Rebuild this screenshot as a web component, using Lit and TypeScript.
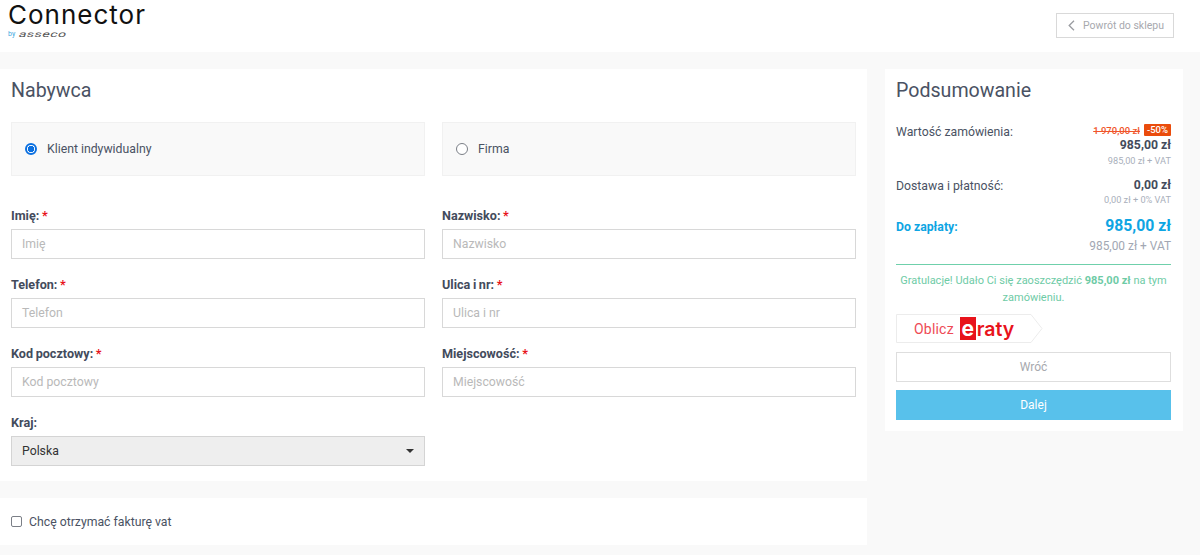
import { LitElement, html, css } from "lit";
import { customElement } from "lit/decorators.js";

@customElement("app-root")
export class AppRoot extends LitElement {
  static styles = css`
    :host { display: block; width: 1200px; height: 555px; overflow: hidden; background: #f9f9f9; font-family: Roboto, "Liberation Sans", sans-serif; font-size: 12.25px; color: #4a5263; }
    * { box-sizing: border-box; }
    header { height: 52px; background: #fff; display: flex; justify-content: space-between; padding: 0 26px 0 8px; }
    .logo { display: flex; flex-direction: column; }
    .brand { font-family: Inter, sans-serif; font-size: 26px; line-height: 29px; color: #111; letter-spacing: 1px; }
    .by { display: flex; align-items: center; gap: 4px; line-height: 8px; height: 8px; margin-top: 1px; }
    .by b { font-weight: 400; font-size: 7px; color: #3fa9e0; }
    .by span { display: inline-block; font-size: 8.5px; letter-spacing: 0.3px; color: #555; transform: scaleX(1.65) skewX(-12deg); transform-origin: left center; }
    .back { margin-top: 13px; height: 25px; width: 118px; border: 1px solid #d9d9d9; display: flex; align-items: center; gap: 8px; padding-left: 11px; color: #a7a9ae; font-size: 10.5px; }
    main { display: flex; align-items: flex-start; padding-top: 17px; gap: 18px; }
    .left { width: 867px; display: flex; flex-direction: column; gap: 17px; }
    .card { background: #fff; }
    .buyer { height: 412px; padding: 11px 11px 0; }
    h2 { margin: 0; font-weight: 400; font-size: 19.6px; line-height: 22px; color: #4a5263; }
    .grid { display: grid; grid-template-columns: 414px 414px; column-gap: 17px; }
    .types { margin-top: 20px; margin-bottom: 31px; }
    .type { height: 54px; background: #f9f9f9; border: 1px solid #f1f1f1; display: flex; align-items: center; padding: 0 0 1px 13px; gap: 10px; }
    .radio { width: 12px; height: 12px; border-radius: 50%; border: 1.5px solid #7b7f87; background: #fff; flex: none; }
    .radio.on { border: 2px solid #0a6fe0; background: radial-gradient(circle, #0a6fe0 0 3px, #fff 3.4px); }
    .fields { row-gap: 14px; }
    .field { display: flex; flex-direction: column; height: 55px; }
    label { font-weight: 700; font-size: 12.6px; line-height: 15px; height: 22px; padding-top: 1px; color: #434b5c; word-spacing: -0.5px; }
    label i { font-style: normal; color: #e8131b; }
    .input { height: 30px; border: 1px solid #d8d8d8; padding-left: 10px; display: flex; align-items: center; color: #b9b9b9; }
    .select { height: 30px; background: #eee; border: 1px solid #d4d4d4; padding: 0 10px; display: flex; align-items: center; justify-content: space-between; color: #333; }
    .caret { width: 0; height: 0; border-left: 4px solid transparent; border-right: 4px solid transparent; border-top: 4px solid #333; }
    .vat { height: 47px; padding-left: 11px; display: flex; align-items: center; gap: 7px; }
    .check { width: 11px; height: 11px; border: 1.5px solid #7b7f87; border-radius: 2px; flex: none; }
    .summary { width: 298px; height: 362px; padding: 11px 12px 0 11px; }
    .row { display: flex; justify-content: space-between; }
    .row .name { line-height: 15px; padding-top: 1px; }
    .vals { display: flex; flex-direction: column; align-items: flex-end; }
    .order { margin-top: 22px; }
    .old { display: flex; align-items: center; gap: 4px; height: 12px; font-size: 9.5px; font-weight: 500; color: #f0552a; }
    .old s { text-decoration-thickness: 1px; }
    .old em { font-style: normal; background: #ea4c0c; color: #fff; border-radius: 1px; padding: 0 3px; line-height: 12px; font-size: 9.5px; font-weight: 500; }
    .price { font-weight: 700; font-size: 12.25px; line-height: 16px; margin-top: 1px; color: #434b5c; }
    .net { font-size: 9.2px; line-height: 12px; color: #a9afbb; margin-top: 2px; }
    .delivery { margin-top: 10px; }
    .delivery .name { padding-top: 2px; }
    .delivery .price { margin-top: 0; }
    .delivery .net { margin-top: 1px; }
    .pay { margin-top: 9px; }
    .pay .name { font-weight: 700; color: #0ea5e3; line-height: 24px; padding-top: 0; }
    .pay .price { font-size: 15.75px; line-height: 22px; color: #0ea5e3; margin: 0; font-weight: 700; }
    .pay .net { font-size: 11.9px; color: #a2a7b3; line-height: 15px; margin-top: 2px; }
    .rule { height: 1px; background: #6fd0ab; margin-top: 10px; }
    .grats { text-align: center; color: #6ecba6; font-size: 11px; line-height: 17px; margin-top: 7px; }
    .eraty { margin-top: 8px; position: relative; width: 147px; height: 29px; display: flex; align-items: center; padding-left: 18px; color: #ee4a55; }
    .eraty svg { position: absolute; left: 0; top: 0; }
    .eraty .ob { position: relative; font-size: 14px; letter-spacing: 0.2px; }
    .eraty .e { position: relative; background: #e8131b; color: #fff; width: 16px; height: 23px; margin-left: 6px; display: flex; align-items: center; justify-content: center; font-size: 21px; font-weight: 700; line-height: 20px; font-family: Inter, sans-serif; }
    .eraty .r { position: relative; font-size: 19.5px; font-weight: 600; color: #e8131b; margin-left: 1px; font-family: Inter, sans-serif; }
    .btn { height: 30px; display: flex; align-items: center; justify-content: center; font-size: 12px; margin-top: 9px; border: 1px solid #dedede; color: #a7a9ae; }
    .btn.primary { background: #58c1eb; border: 0; color: #fff; margin-top: 8px; }
  `;

  private field(name: string, req = true) {
    return html`<div class="field">
      <label>${name}: ${req ? html`<i>*</i>` : ""}</label>
      <div class="input">${name}</div>
    </div>`;
  }

  render() {
    return html`
      <header>
        <div class="logo">
          <div class="brand">Connector</div>
          <div class="by"><b>by</b><span>asseco</span></div>
        </div>
        <div class="back">
          <svg width="7" height="11" viewBox="0 0 7 11"><path d="M6 .8 1.2 5.5 6 10.2" fill="none" stroke="#9a9ca1" stroke-width="1.3"/></svg>
          <span>Powrót do sklepu</span>
        </div>
      </header>
      <main>
        <div class="left">
          <section class="card buyer">
            <h2>Nabywca</h2>
            <div class="grid types">
              <div class="type"><span class="radio on"></span>Klient indywidualny</div>
              <div class="type"><span class="radio"></span>Firma</div>
            </div>
            <div class="grid fields">
              ${this.field("Imię")}
              ${this.field("Nazwisko")}
              ${this.field("Telefon")}
              ${this.field("Ulica i nr")}
              ${this.field("Kod pocztowy")}
              ${this.field("Miejscowość")}
              <div class="field">
                <label>Kraj:</label>
                <div class="select">Polska<span class="caret"></span></div>
              </div>
            </div>
          </section>
          <section class="card vat"><span class="check"></span>Chcę otrzymać fakturę vat</section>
        </div>
        <aside class="card summary">
          <h2>Podsumowanie</h2>
          <div class="row order">
            <div class="name">Wartość zamówienia:</div>
            <div class="vals">
              <div class="old"><s>1 970,00 zł</s><em>-50%</em></div>
              <div class="price">985,00 zł</div>
              <div class="net">985,00 zł + VAT</div>
            </div>
          </div>
          <div class="row delivery">
            <div class="name">Dostawa i płatność:</div>
            <div class="vals">
              <div class="price">0,00 zł</div>
              <div class="net">0,00 zł + 0% VAT</div>
            </div>
          </div>
          <div class="row pay">
            <div class="name">Do zapłaty:</div>
            <div class="vals">
              <div class="price">985,00 zł</div>
              <div class="net">985,00 zł + VAT</div>
            </div>
          </div>
          <div class="rule"></div>
          <div class="grats">Gratulacje! Udało Ci się zaoszczędzić <b>985,00 zł</b> na tym zamówieniu.</div>
          <div class="eraty">
            <svg width="147" height="29" viewBox="0 0 147 29"><path d="M.5.5H135L146 14.5 135 28.5H.5Z" fill="#fff" stroke="#ececec"/></svg>
            <span class="ob">Oblicz</span><span class="e">e</span><span class="r">raty</span>
          </div>
          <div class="btn">Wróć</div>
          <div class="btn primary">Dalej</div>
        </aside>
      </main>
    `;
  }
}
